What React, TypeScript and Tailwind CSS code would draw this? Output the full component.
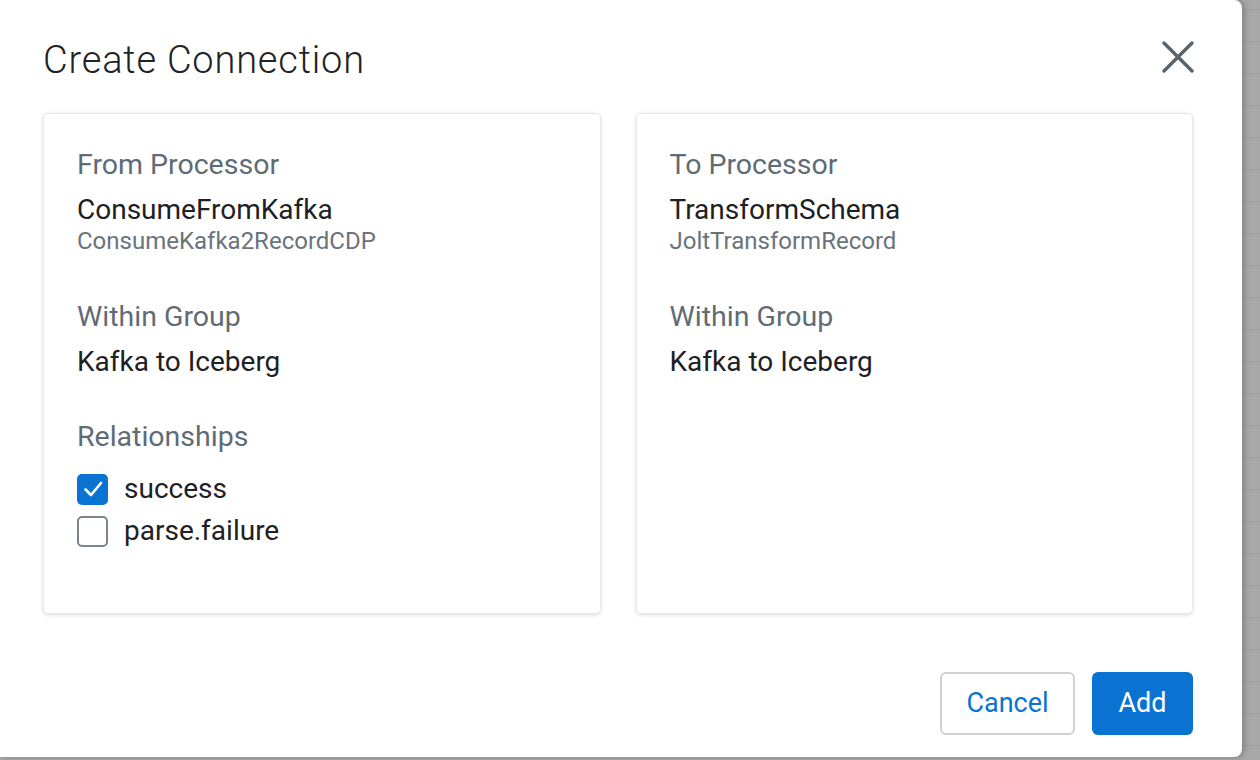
import { useState } from "react";

const font = { fontFamily: "Roboto, 'Noto Sans', sans-serif" };

export default function App() {
  const [rels, setRels] = useState({ success: true, "parse.failure": false });

  return (
    <div className="flex h-[760px] w-[1260px] overflow-hidden bg-[#a8a8a8]" style={font}>
      {/* — Dialog ------------------------------------------------- */}
      <div className="relative z-10 flex h-[757px] w-[1242px] shrink-0 flex-col rounded-r-[8px] bg-white pl-[43px] pr-[49px] shadow-[2px_0_6px_rgba(0,0,0,0.25)]">
        <div className="mt-[30px] flex h-[60px] items-center justify-between">
          <h1 className="text-[38px] font-light leading-none tracking-[0.8px] text-[#1f2326]">Create Connection</h1>
          <button className="-mt-[6px] mr-[-1px] text-[#59636c]" aria-label="Close">
            <svg width="32" height="32" viewBox="0 0 32 32" fill="none" stroke="currentColor" strokeWidth="3.4" strokeLinecap="round">
              <path d="M2 2L30 30M30 2L2 30" />
            </svg>
          </button>
        </div>

        <div className="mt-[23px] grid grid-cols-2 gap-[35px]">
          <Card>
            <Label>From Processor</Label>
            <Value>ConsumeFromKafka</Value>
            <Sub>ConsumeKafka2RecordCDP</Sub>
            <div className="mt-[45px]" />
            <Label>Within Group</Label>
            <Value>Kafka to Iceberg</Value>
            <div className="mt-[39px]" />
            <Label>Relationships</Label>
            <div className="mt-[13px] flex flex-col">
              {(Object.keys(rels) as (keyof typeof rels)[]).map((k) => (
                <label key={k} className="flex h-[42px] cursor-pointer items-center gap-[16px]">
                  <Checkbox
                    checked={rels[k]}
                    onChange={() => setRels({ ...rels, [k]: !rels[k] })}
                  />
                  <span className="text-[28px] text-[#1e2124]">{k}</span>
                </label>
              ))}
            </div>
          </Card>
          <Card>
            <Label>To Processor</Label>
            <Value>TransformSchema</Value>
            <Sub>JoltTransformRecord</Sub>
            <div className="mt-[45px]" />
            <Label>Within Group</Label>
            <Value>Kafka to Iceberg</Value>
          </Card>
        </div>

        <div className="mt-[58px] flex justify-end gap-[17px]">
          <button className="h-[63px] w-[135px] rounded-[6px] border-2 border-[#cdd1d5] bg-white text-[27px] text-[#0a73d2]">
            Cancel
          </button>
          <button className="h-[63px] w-[101px] rounded-[6px] bg-[#0a73d2] text-[27px] text-white">
            Add
          </button>
        </div>
      </div>

      {/* — Page behind the overlay ------------------------------- */}
      <div className="flex flex-1 flex-col pt-[9px]">
        {Array.from({ length: 24 }).map((_, i) => (
          <div key={i} className="h-[32px] shrink-0 border-t border-[#9d9d9d]" />
        ))}
      </div>
    </div>
  );
}

function Card({ children }: { children: React.ReactNode }) {
  return (
    <div className="flex h-[501px] flex-col rounded-[5px] border border-[#e8e8e8] bg-white px-[33px] pt-[33px] shadow-[0_1px_4px_rgba(0,0,0,0.14)]">
      {children}
    </div>
  );
}

function Label({ children }: { children: React.ReactNode }) {
  return <p className="text-[28.5px] leading-[36px] text-[#5f6b75]">{children}</p>;
}

function Value({ children }: { children: React.ReactNode }) {
  return <p className="mt-[9px] text-[28px] leading-[36px] text-[#1e2124]">{children}</p>;
}

function Sub({ children }: { children: React.ReactNode }) {
  return <p className="text-[24px] leading-[26px] text-[#6a737b]">{children}</p>;
}

function Checkbox({ checked, onChange }: { checked: boolean; onChange: () => void }) {
  return (
    <span
      onClick={(e) => {
        e.preventDefault();
        onChange();
      }}
      className={
        checked
          ? "grid h-[31px] w-[31px] place-items-center rounded-[5px] bg-[#0a73d2]"
          : "grid h-[31px] w-[31px] place-items-center rounded-[5px] border-2 border-[#7d858c] bg-white"
      }
    >
      {checked && (
        <svg width="22" height="22" viewBox="0 0 22 22" fill="none" stroke="white" strokeWidth="2.6" strokeLinecap="round" strokeLinejoin="round">
          <path d="M3.5 11.5L9 17L19 5" />
        </svg>
      )}
    </span>
  );
}
